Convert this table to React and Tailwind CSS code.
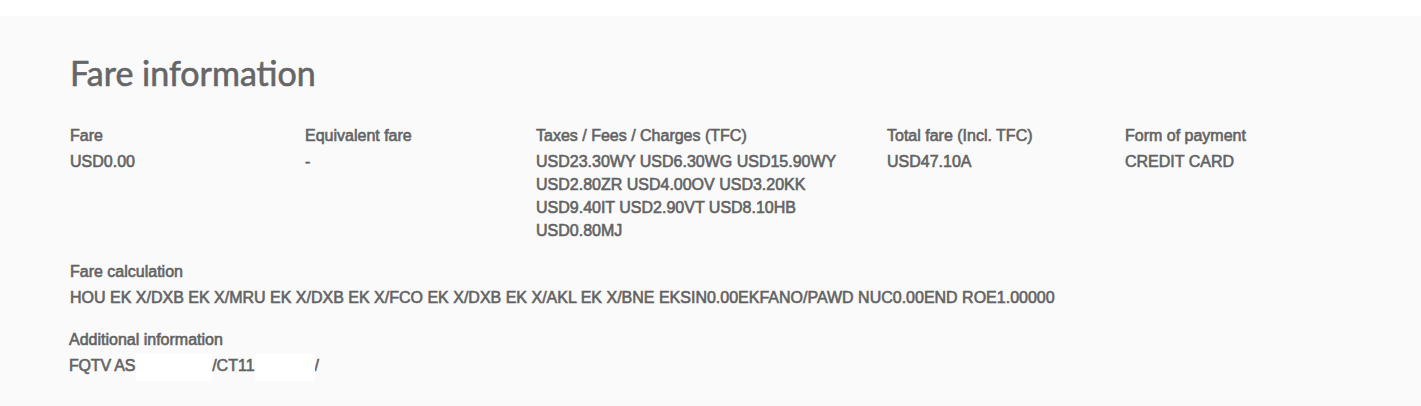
export default function App() {
  const cols = [
    { label: "Fare", w: "w-[235px]", value: ["USD0.00"] },
    { label: "Equivalent fare", w: "w-[231px]", value: ["-"] },
    {
      label: "Taxes / Fees / Charges (TFC)",
      w: "w-[351px]",
      value: [
        "USD23.30WY USD6.30WG USD15.90WY",
        "USD2.80ZR USD4.00OV USD3.20KK",
        "USD9.40IT USD2.90VT USD8.10HB",
        "USD0.80MJ",
      ],
    },
    { label: "Total fare (Incl. TFC)", w: "w-[238px]", value: ["USD47.10A"] },
    { label: "Form of payment", w: "w-[238px]", value: ["CREDIT CARD"] },
  ];

  return (
    <div className="min-h-[406px] bg-white pt-4">
      <div className="min-h-[390px] bg-[#fafafa] pl-[70px] pt-[37px] font-['Liberation_Sans',Arial,sans-serif] text-[16px] text-[#636363] [-webkit-text-stroke:0.6px_#636363]">
        <h2 className="font-['Lato','Open_Sans',sans-serif] text-[34px] leading-[40px] font-normal text-[#666] [-webkit-text-stroke:0.6px_#666]">
          Fare information
        </h2>

        <div className="mt-[31px] flex">
          {cols.map((c) => (
            <div key={c.label} className={c.w}>
              <p className="leading-[24px]">{c.label}</p>
              <div className="mt-[2px] leading-[23px]">
                {c.value.map((v) => (
                  <p key={v}>{v}</p>
                ))}
              </div>
            </div>
          ))}
        </div>

        <div className="mt-[18px]">
          <p className="leading-[24px]">Fare calculation</p>
          <p className="mt-[2px] leading-[23px]">
            HOU EK X/DXB EK X/MRU EK X/DXB EK X/FCO EK X/DXB EK X/AKL EK X/BNE EKSIN0.00EKFANO/PAWD NUC0.00END ROE1.00000
          </p>
        </div>

        <div className="mt-[19px] -ml-px">
          <p className="leading-[24px]">Additional information</p>
          <div className="mt-[2px] flex h-[23px] items-center leading-[23px]">
            <span className="tracking-[-0.2px]">FQTV AS</span>
            <span className="ml-px h-[27px] w-[76px] translate-y-[2px] bg-white" />
            <span>/CT11</span>
            <span className="h-[27px] w-[60px] translate-y-[2px] bg-white" />
            <span>/</span>
          </div>
        </div>
      </div>
    </div>
  );
}
